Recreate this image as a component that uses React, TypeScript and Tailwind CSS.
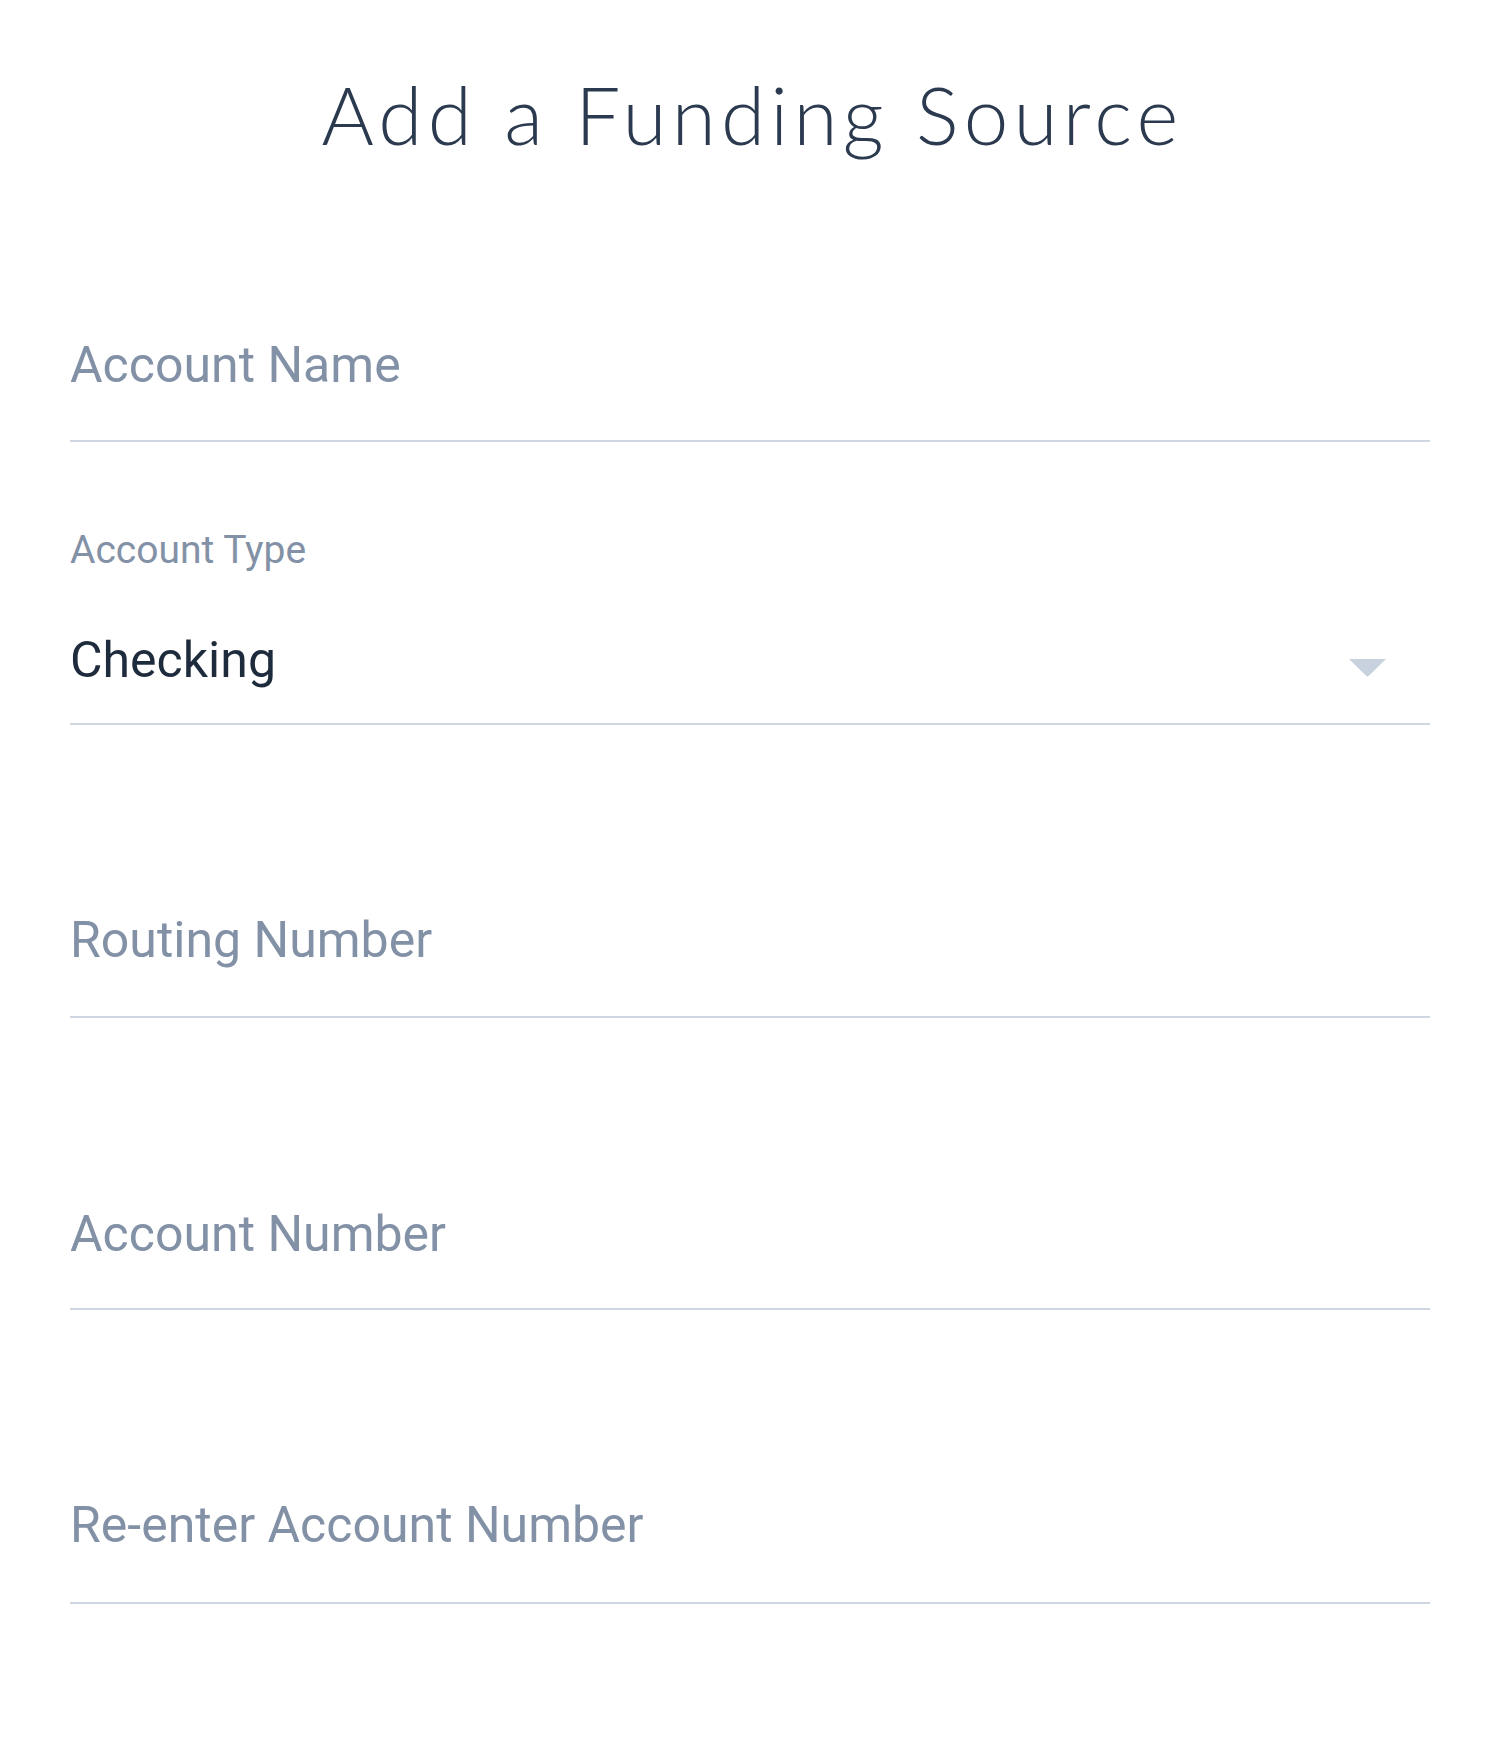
import React from "react";

const fieldText =
  "text-[50px] leading-[58px] text-[#8391a7] font-['Roboto',_'Liberation_Sans',_sans-serif]";

function Field({ label, mt, pb }: { label: string; mt: string; pb: string }) {
  return (
    <div className={`${mt} ${pb} border-b-2 border-[#cdd6e1]`}>
      <div className={fieldText}>{label}</div>
    </div>
  );
}

export default function App() {
  return (
    <div className="min-h-[1742px] w-full bg-white px-[70px]">
      <h1 className="pt-[74px] pl-[5px] text-center text-[80px] leading-[80px] font-light tracking-[5.3px] text-[#2b3a4f] font-['Lato',_'Liberation_Sans',_sans-serif]">
        Add a Funding Source
      </h1>

      <div className="mt-[182px] pb-[46px] border-b-2 border-[#cdd6e1]">
        <div className={fieldText}>Account Name</div>
      </div>

      <div className="mt-[86px] pb-[34px] border-b-2 border-[#cdd6e1]">
        <div className="text-[39px] leading-[44px] text-[#8391a7] font-['Roboto',_'Liberation_Sans',_sans-serif]">
          Account Type
        </div>
        <div className="mt-[59px] flex items-center justify-between">
          <div className="text-[50px] leading-[58px] text-[#1e2b3c] font-['Roboto',_'Liberation_Sans',_sans-serif]">
            Checking
          </div>
          <svg
            width="37"
            height="18"
            viewBox="0 0 37 18"
            className="mt-[15px] mr-[44px]"
            aria-hidden="true"
          >
            <path d="M0 0 L37 0 L20.2 16.6 Q18.5 18.2 16.8 16.6 Z" fill="#c8d2de" />
          </svg>
        </div>
      </div>

      <Field label="Routing Number" mt="mt-[186px]" pb="pb-[47px]" />
      <Field label="Account Number" mt="mt-[187px]" pb="pb-[45px]" />
      <Field label="Re-enter Account Number" mt="mt-[186px]" pb="pb-[48px]" />
    </div>
  );
}
